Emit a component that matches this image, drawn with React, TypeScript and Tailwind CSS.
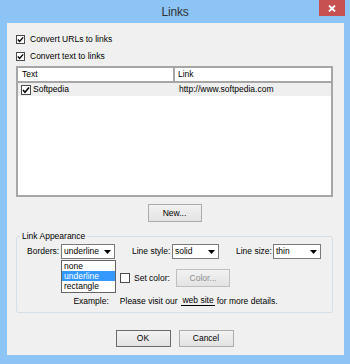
import React from 'react';

function Check({ checked = false, size = 9 }: { checked?: boolean; size?: number }) {
  return (
    <span
      className="flex shrink-0 items-center justify-center border border-[#4a4a4a] bg-white"
      style={{ width: size, height: size }}
    >
      {checked && (
        <svg width={size - 2} height={size - 2} viewBox="0 0 8 8">
          <path d="M1 4 L3 6.2 L7 1.6" fill="none" stroke="#000" strokeWidth="1.6" />
        </svg>
      )}
    </span>
  );
}

function Combo({ value, width }: { value: string; width: number }) {
  return (
    <div
      className="flex h-[15px] shrink-0 items-center border border-[#7a7a7a] bg-white"
      style={{ width }}
    >
      <span className="flex-1 pl-[2px] leading-[13px]">{value}</span>
      <span className="flex h-full w-[14px] items-center justify-center">
        <svg width="7" height="4" viewBox="0 0 7 4">
          <path d="M0 0 H7 L3.5 4 Z" fill="#000" />
        </svg>
      </span>
    </div>
  );
}

function Button({ label, width, height = 18, def = false, disabled = false }: { label: string; width: number; height?: number; def?: boolean; disabled?: boolean }) {
  return (
    <div
      className={
        'flex items-center justify-center border bg-linear-to-b from-[#f2f2f2] to-[#e3e3e3] ' +
        (def ? 'border-[#6a6a6a] text-black' : disabled ? 'border-[#bfbfbf] text-[#8d8d8d]' : 'border-[#acacac] text-black')
      }
      style={{ width, height }}
    >
      {label}
    </div>
  );
}

export default function App() {
  return (
    <div className="flex h-[364px] w-[350px] flex-col bg-[#8cc4f5] font-['Liberation_Sans',Arial,sans-serif] text-[8.5px] text-black">
      {/* title bar */}
      <div className="grid h-[23px] shrink-0 grid-cols-[1fr_auto_1fr]">
        <div />
        <div className="self-center text-[12px] leading-[14px] text-[#333] tracking-[-0.2px]">Links</div>
        <div className="flex justify-end">
          <div className="mr-[5px] flex h-[16px] w-[26px] items-center justify-center bg-[#c75050]">
            <svg width="8" height="7" viewBox="0 0 8 7">
              <path d="M1 0.5 L7 6.5 M7 0.5 L1 6.5" stroke="#fff" strokeWidth="1.8" />
            </svg>
          </div>
        </div>
      </div>

      {/* client area */}
      <div className="ml-[7px] mr-[6px] flex h-[332px] flex-col bg-[#f0f0f0] pl-[9px] pr-[11px] pt-[10px]">
        <div className="flex h-[13px] items-center gap-[5px]">
          <Check checked />
          <span>Convert URLs to links</span>
        </div>
        <div className="mt-[4px] flex h-[13px] items-center gap-[5px]">
          <Check checked />
          <span>Convert text to links</span>
        </div>

        {/* list view */}
        <div className="mt-[3px] flex h-[131px] flex-col border-2 border-[#a6a6a6] bg-white">
          <div className="flex h-[15px] border-b-2 border-[#a6a6a6]">
            <div className="flex w-[157px] items-center border-r-2 border-[#a6a6a6] pl-[4px]">Text</div>
            <div className="flex flex-1 items-center pl-[3px]">Link</div>
          </div>
          <div className="flex h-[13px] bg-[#efefef]">
            <div className="flex w-[159px] items-center gap-[2px] pl-[3px]">
              <Check checked size={10} />
              <span>Softpedia</span>
            </div>
            <div className="flex flex-1 items-center pl-[2px]">http://www.softpedia.com</div>
          </div>
        </div>

        <div className="mt-[7px] flex justify-center">
          <Button label="New..." width={54} />
        </div>

        {/* link appearance group */}
        <fieldset className="mt-[9px] rounded-[3px] border border-[#d5dfe5] p-0">
          <legend className="ml-[3px] px-[2px] leading-[10px]">Link Appearance</legend>
          <div className="mt-[3px] flex h-[15px] items-center pl-[10px]">
            <span className="w-[34px]">Borders:</span>
            <div className="relative">
              <Combo value="underline" width={54} />
              <div className="absolute left-0 top-[16px] z-10 flex w-[55px] flex-col border border-[#646464] bg-white">
                <div className="h-[10px] pl-[2px] leading-[10px]">none</div>
                <div className="h-[10px] bg-[#3399ff] pl-[2px] leading-[10px] text-white">underline</div>
                <div className="h-[11px] pl-[2px] leading-[10px]">rectangle</div>
              </div>
            </div>
            <span className="ml-[17px] w-[40px]">Line style:</span>
            <Combo value="solid" width={47} />
            <span className="ml-[17px] w-[37px]">Line size:</span>
            <Combo value="thin" width={48} />
          </div>
          <div className="mt-[10px] flex h-[18px] items-center pl-[103px]">
            <Check size={10} />
            <span className="ml-[4px] w-[42px]">Set color:</span>
            <Button label="Color..." width={54} disabled />
          </div>
          <div className="mb-[6px] mt-[9px] flex h-[10px] items-center justify-center pl-[2px]">
            <span>Example:</span>
            <span className="ml-[11px]">Please visit our</span>
            <span className="ml-[4px] border-b border-black px-[1px] leading-[9px]">web site</span>
            <span className="ml-[2px]">for more details.</span>
          </div>
        </fieldset>

        <div className="mt-[17px] flex justify-center gap-[8px]">
          <Button label="OK" width={55} height={17} def />
          <Button label="Cancel" width={55} height={17} />
        </div>
      </div>
    </div>
  );
}
